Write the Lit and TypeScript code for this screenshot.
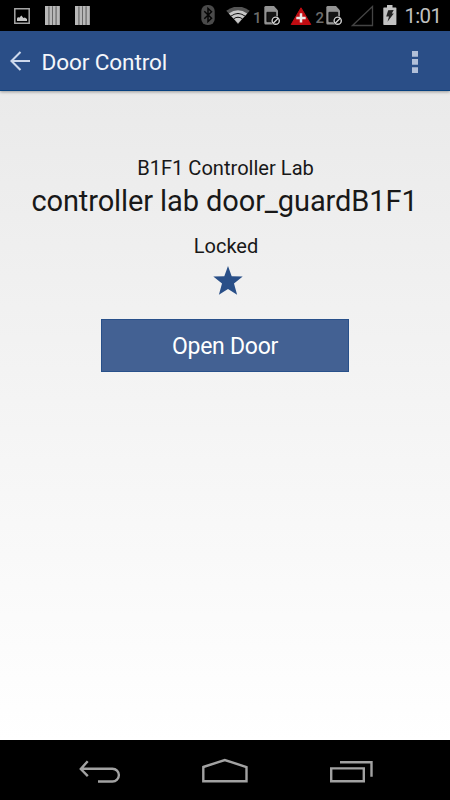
import { LitElement, html, svg, css } from "lit";
import { customElement } from "lit/decorators.js";

const bars = html`<svg class="bars" width="15" height="19" viewBox="0 0 15 19">
  <path d="M0 0h15v19H0z" fill="#777"/>
  <path d="M0 0h3.5v19H0zM4.4 0h2.6v19H4.4zM8 0h2.6v19H8zM11.6 0h3v19h-3z" fill="#b8b8b8"/>
  <path d="M3.9 1v18M7.5 1v18M11.1 1v18" stroke="#606060" stroke-width=".6"/>
</svg>`;

const sim = (cls: string) => html`<svg class=${cls} width="17" height="20" viewBox="0 0 17 20">
  <path d="M1.5 0H10l4 4.5V18.5H1.5Q.3 18.5.3 17V1.5Q.3 0 1.5 0z" fill="#939393"/>
  <path d="M2.9 6.3h8.8v9.4H2.9z" fill="#151515" stroke="#000" stroke-width=".8"/>
  <circle cx="11.7" cy="14.7" r="4.6" fill="#000"/>
  <circle cx="11.7" cy="14.7" r="3.6" fill="#000" stroke="#d0d0d0" stroke-width="1.4"/>
  <path d="M9.2 17.2l5-5" stroke="#d0d0d0" stroke-width="1.4"/>
</svg>`;

const wifiArc = (r: number, color: string) =>
  svg`<path d="M12 16.5 L${12 - r * 0.7} ${16.5 - r * 0.76} Q12 ${16.5 - r * 1.26} ${12 + r * 0.7} ${16.5 - r * 0.76}z" fill=${color}/>`;

@customElement("status-bar")
class StatusBar extends LitElement {
  static styles = css`
    :host { display: flex; height: 31px; background: #000; color: #c0c0c0; align-items: flex-start; }
    svg { flex: none; display: block; }
    .picture { margin: 8px 0 0 14px; }
    .bars { margin: 6px 0 0 15px; }
    .bluetooth { margin: 5px 0 0 111px; }
    .wifi { margin: 7px 0 0 11px; }
    .slot { flex: none; width: 10px; font: 500 15px/16px Roboto, sans-serif; color: #6c6c6c; margin-top: 10px; }
    .one { margin-left: 3px; }
    .two { margin-left: 4px; }
    .sim1, .sim2 { margin: 6px 0 0 0.5px; }
    .alert { margin: 7px 0 0 9px; }
    .signal { margin: 5px 0 0 8px; }
    .battery { margin: 5px 0 0 9px; }
    .clock { flex: none; margin: 4px 0 0 7.5px; font: 20.5px/24px Roboto, sans-serif; letter-spacing: -0.7px; }
  `;
  render() {
    return html`
      <svg class="picture" width="16" height="16" viewBox="0 0 16 16">
        <path d="M.8.8h14.4v14.4H.8z" fill="none" stroke="#a5a5a5" stroke-width="1.5"/>
        <path d="M3 13v-2.5l1-1.5 1.2.8L7.4 7.5 9.4 10l1.5-.6L13 11v2z" fill="#c8c8c8"/>
      </svg>
      ${bars}${bars}
      <svg class="bluetooth" width="14" height="20" viewBox="0 0 14 20">
        <rect x=".3" width="13.4" height="20" rx="6" ry="6" fill="#4a4a4a"/>
        <path d="M3.3 6.3l7.2 7L7 16.5v-13l3.5 3.2-7.2 7" fill="none" stroke="#050505" stroke-width="1.5"/>
      </svg>
      <svg class="wifi" width="24" height="18" viewBox="0 0 24 18">
        ${wifiArc(16.8, "#555")}${wifiArc(13.2, "#c8c8c8")}${wifiArc(10.3, "#000")}${wifiArc(9.5, "#c8c8c8")}${wifiArc(6.6, "#000")}${wifiArc(5.8, "#c8c8c8")}
      </svg>
      <span class="slot one">1</span>${sim("sim1")}
      <svg class="alert" width="22" height="19" viewBox="0 0 22 19">
        <path d="M11 .8L20.8 17.5H1.2z" fill="#c00c12" stroke="#c00c12" stroke-linejoin="round"/>
        <path d="M11 6.2v9.4M6.3 10.9h9.4" stroke="#e8e8e8" stroke-width="2.5"/>
      </svg>
      <span class="slot two">2</span>${sim("sim2")}
      <svg class="signal" width="23" height="22" viewBox="0 0 23 22">
        <path d="M1.5 20.5H21.5V1.5z" fill="none" stroke="#444" stroke-width="1.3"/>
      </svg>
      <svg class="battery" width="14" height="20" viewBox="0 0 14 20">
        <path d="M4 0h5.5v2.4h3.2q.7 0 .7.7v16.2q0 .7-.7.7H1q-.7 0-.7-.7V3.1q0-.7.7-.7h3z" fill="#c2c2c2"/>
        <path d="M5.2 5.2L10.7 4.9 8.8 8.6h2L4.5 16.8 6 11.4H3.2z" fill="#222"/>
      </svg>
      <span class="clock">1:01</span>`;
  }
}

@customElement("action-bar")
class ActionBar extends LitElement {
  static styles = css`
    :host { display: flex; box-sizing: border-box; height: 60px; align-items: center; background: #2a4e87;
      border-bottom: 1px solid #08417f; box-shadow: 0 1px 3px rgba(0,0,0,.35); color: #f4f6fa; z-index: 1; }
    svg { flex: none; display: block; }
    .back { margin: 1px 0 0 10px; }
    .title { flex: 1; margin: 4px 0 0 11.5px; font: 22.6px/28px Roboto, sans-serif; letter-spacing: -0.12px; white-space: nowrap; }
    .more { margin: 2px 32px 0 0; }
  `;
  render() {
    return html`
      <svg class="back" width="20" height="20" viewBox="0 0 20 20">
        <path d="M10.5 1L1.5 10l9 9M1.8 10H20" fill="none" stroke="#cdd8ec" stroke-width="2.1"/>
      </svg>
      <span class="title">Door Control</span>
      <svg class="more" width="6" height="22" viewBox="0 0 6 22">
        <path d="M0 0h6v5.7H0zM0 8.1h6v5.7H0zM0 16.2h6v5.7H0z" fill="#b1bfd8"/>
      </svg>`;
  }
}

@customElement("nav-bar")
class NavBar extends LitElement {
  static styles = css`
    :host { display: flex; height: 60px; background: #000; align-items: flex-start; }
    svg { flex: none; display: block; fill: none; stroke: #a2a2a2; stroke-width: 2.4; }
    .back { margin: 20px 0 0 79px; }
    .home { margin: 18px 0 0 81px; }
    .recent { margin: 20px 0 0 81px; }
  `;
  render() {
    return html`
      <svg class="back" width="42" height="24" viewBox="0 0 42 24">
        <path d="M8.7 1.2L1.8 9l7 7.2M2 8.7H33.5a6.4 6.4 0 0 1 0 12.8H19"/>
      </svg>
      <svg class="home" width="47" height="26" viewBox="0 0 47 26">
        <path d="M1.3 9L22.8 2 44.5 9v14.3H1.3z"/>
      </svg>
      <svg class="recent" width="44" height="24" viewBox="0 0 44 24">
        <path d="M1.2 8.4h32.6v12.9H1.2zM10 2.3h31.5v14.4"/>
      </svg>`;
  }
}

@customElement("app-root")
class AppRoot extends LitElement {
  static styles = css`
    :host { display: flex; flex-direction: column; width: 450px; height: 800px; overflow: hidden;
      font-family: Roboto, sans-serif; color: #181818; }
    .content { flex: 1; display: flex; flex-direction: column; align-items: center;
      background: linear-gradient(#eaeaea, #fff); white-space: nowrap; }
    .place { margin: 64px 0 0 1px; font-size: 20.1px; line-height: 26px; }
    .door { margin: 2px 1px 0 0; font-size: 29px; line-height: 36px; letter-spacing: -0.1px; }
    .state { margin: 14px 0 0 2px; font-size: 20px; line-height: 26px; }
    .star { display: block; margin: 7px 0 0 6px; }
    .open { box-sizing: border-box; width: 248.5px; height: 52.5px; margin-top: 23px; padding: 4px 0 0;
      border: 1px solid #28508a; border-radius: 0; background: #436193; color: #fff;
      font: 23px/28px Roboto, sans-serif; letter-spacing: -0.25px; }
  `;
  render() {
    return html`
      <status-bar></status-bar>
      <action-bar></action-bar>
      <main class="content">
        <div class="place">B1F1 Controller Lab</div>
        <div class="door">controller lab door_guardB1F1</div>
        <div class="state">Locked</div>
        <svg class="star" width="30" height="30" viewBox="0 0 30 30">
          <path d="M15 0l3.7 10.3 11 .3-8.7 6.8 3.1 11.4L15 23l-9.1 5.8L9 17.4.3 10.6l11-.3z" fill="#294f88"/>
        </svg>
        <button class="open">Open Door</button>
      </main>
      <nav-bar></nav-bar>`;
  }
}
